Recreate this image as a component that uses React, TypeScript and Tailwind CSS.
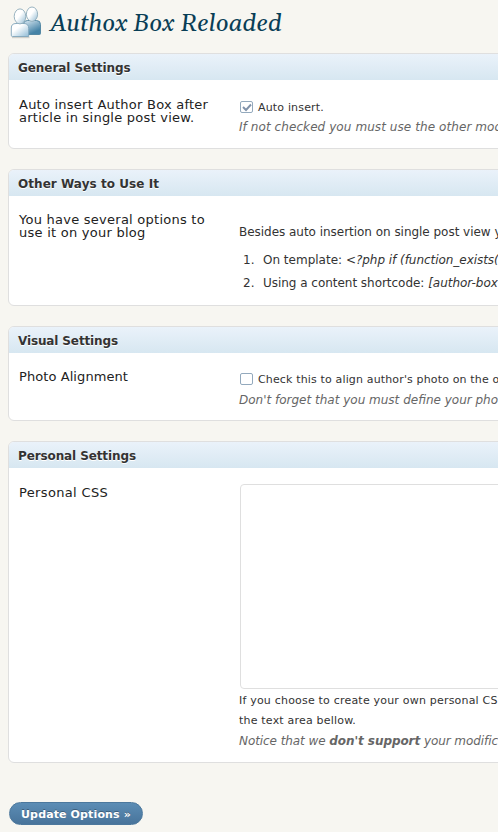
import type { ReactNode } from "react";

const sans = "font-['DejaVu_Sans',sans-serif]";

function UsersIcon() {
  return (
    <svg className="h-[34px] w-[34px] shrink-0" viewBox="0 0 34 34">
      <defs>
        <linearGradient id="front" x1="0" y1="0" x2="1" y2="1">
          <stop offset="0.35" stopColor="#ffffff" />
          <stop offset="1" stopColor="#8fbbd6" />
        </linearGradient>
        <linearGradient id="back" x1="0" y1="0" x2="0.6" y2="1">
          <stop offset="0" stopColor="#dceaf3" />
          <stop offset="0.9" stopColor="#4583a7" />
        </linearGradient>
        <linearGradient id="head" x1="0" y1="0" x2="1" y2="1">
          <stop offset="0.45" stopColor="#ffffff" />
          <stop offset="1" stopColor="#8fb9d2" />
        </linearGradient>
      </defs>
      <path d="M4 31.500h17.500" stroke="#cfcfca" strokeWidth="1.400" fill="none" />
      <path d="M15.500 28.500V18q0-3.500 4-3.500h9q4 0 4 4v9q0 1-1 1z" fill="url(#back)" stroke="#4c829f" strokeWidth="0.900" />
      <ellipse cx="24" cy="8.200" rx="5.600" ry="7.200" fill="url(#head)" stroke="#8fabba" strokeWidth="0.900" />
      <path d="M4.500 30.500q-1.200 0-1.200-1.200V22q0-4.500 4.700-4.500h8q4.700 0 4.700 5v8z" fill="url(#front)" stroke="#7fa4ba" strokeWidth="0.900" />
      <ellipse cx="12" cy="10.400" rx="5.800" ry="7.500" fill="url(#head)" stroke="#8fabba" strokeWidth="0.900" />
    </svg>
  );
}

function Panel({ title, height, label, labelClass, titleClass, children }: { title: string; height: string; label: ReactNode; labelClass: string; titleClass: string; children: ReactNode }) {
  return (
    <section className={`w-[520px] shrink-0 overflow-hidden rounded-[6px] border border-[#dfdfdf] bg-white ${height}`}>
      <h3 className={`h-[26px] bg-linear-to-b from-[#eaf2fa] to-[#d7e7f1] pl-[9px] text-[12px] leading-[29px] font-bold text-[#333] [text-shadow:0_1px_0_#fff] ${titleClass}`}>
        {title}
      </h3>
      <div className="flex whitespace-nowrap">
        <div className={`w-[230px] shrink-0 pl-[10px] text-[13px] leading-[13px] text-[#222] ${labelClass}`}>{label}</div>
        <div className="w-[300px] shrink-0">{children}</div>
      </div>
    </section>
  );
}

function Checkbox({ checked = false }: { checked?: boolean }) {
  return (
    <span className="mr-[5px] ml-px flex h-[12px] w-[13px] items-center justify-center rounded-[2px] border border-[#93a9bd] bg-white">
      {checked && (
        <svg className="h-[9px] w-[10px]" viewBox="0 0 10 9">
          <path d="M1 4l3 3 5-5.500" fill="none" stroke="#8092aa" strokeWidth="1.900" />
        </svg>
      )}
    </span>
  );
}

export default function App() {
  return (
    <main className={`h-[832px] w-[498px] overflow-hidden bg-[#f7f6f1] pl-2 text-[#333] ${sans}`}>
      <header className="flex h-[53px] items-start pt-[6px]">
        <UsersIcon />
        <h1 className="ml-[8px] pt-px font-['Gelasio','Georgia','DejaVu_Serif',serif] text-[24px] leading-[34px] tracking-[0.13px] whitespace-nowrap text-[#093e56] italic">
          Authox Box Reloaded
        </h1>
      </header>

      <div className="flex flex-col gap-5">
        <Panel title="General Settings" height="h-[96px]" titleClass="tracking-[-0.06px]" labelClass="pt-[18px] tracking-[0.24px]" label={<>Auto insert Author Box after<br />article in single post view.</>}>
          <label className="mt-[17px] flex h-[20px] items-center text-[11px] tracking-[0.17px]">
            <Checkbox checked />
            <span className="pt-[2px]">Auto insert.</span>
          </label>
          <p className="text-[12px] leading-5 tracking-[0.08px] text-[#666] italic">If not checked you must use the other mode</p>
        </Panel>

        <Panel title="Other Ways to Use It" height="h-[137px]" titleClass="tracking-[0.05px]" labelClass="pt-[17px] tracking-[0.25px]" label={<>You have several options to<br />use it on your blog</>}>
          <p className="mt-[26px] text-[12px] leading-5 tracking-[-0.03px]">Besides auto insertion on single post view you</p>
          <ol className="mt-[7px] text-[12px] leading-[23px]">
            <li className="flex pl-1"><span className="w-5">1.</span><span>On template: <em className="tracking-[-0.04px]">&lt;?php if (function_exists(</em></span></li>
            <li className="flex pl-1"><span className="w-5">2.</span><span className="tracking-[-0.03px]">Using a content shortcode: <em>[author-box</em></span></li>
          </ol>
        </Panel>

        <Panel title="Visual Settings" height="h-[95px]" titleClass="tracking-[-0.13px]" labelClass="pt-[17px] tracking-[0.08px]" label="Photo Alignment">
          <label className="mt-[16px] flex h-[20px] items-center text-[11px] tracking-[0.15px]">
            <Checkbox />
            <span className="pt-[2px]">Check this to align author's photo on the other</span>
          </label>
          <p className="pt-px text-[12px] leading-5 text-[#666] italic">Don't forget that you must define your photo</p>
        </Panel>

        <Panel title="Personal Settings" height="h-[322px]" titleClass="tracking-[-0.11px]" labelClass="pt-[18px] tracking-[0.35px]" label="Personal CSS">
          <textarea aria-label="Personal CSS" className="mt-[16px] ml-px block h-[205px] w-[290px] resize-none rounded-[4px] border border-[#dfdfdf] bg-white" />
          <p className="mt-[2px] text-[11px] leading-5 tracking-[0.2px]">If you choose to create your own personal CSS<br />the text area bellow.</p>
          <p className="text-[12px] leading-5 tracking-[-0.07px] text-[#666] italic">Notice that we <strong>don't support</strong> your modifications</p>
        </Panel>
      </div>

      <button className="mt-[39px] ml-px flex h-[23px] w-[134px] items-center justify-center rounded-full border border-[#4c789d] bg-linear-to-b from-[#5c8db5] to-[#48749b] pt-[3px] text-[11px] font-bold tracking-[0.13px] whitespace-nowrap text-white [text-shadow:0_-1px_0_rgba(0,0,0,0.3)]">
        Update Options »
      </button>
    </main>
  );
}
